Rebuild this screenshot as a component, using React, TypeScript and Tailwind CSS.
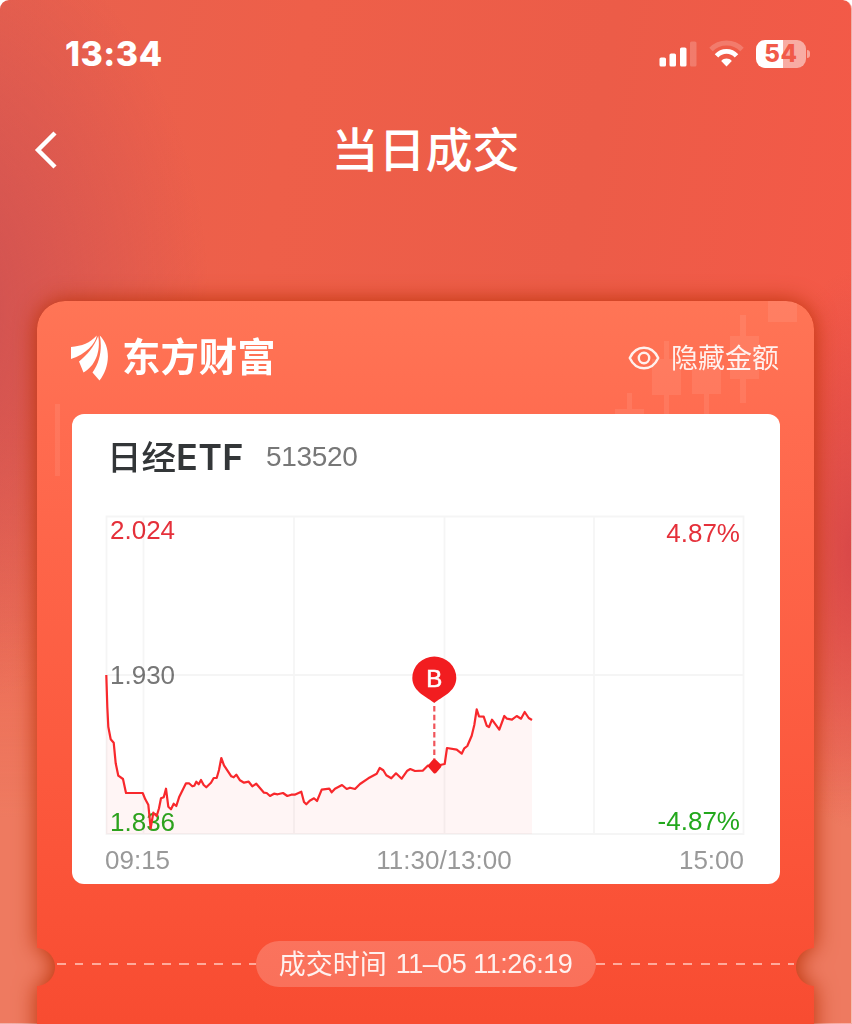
import { ReactNode } from 'react';

// Intraday line, relative to the top left corner of the grid
const prices: [number, number][] = [
  [0.3, 159], [1.3, 190.7], [2.3, 210.7], [4.7, 223.3], [7.7, 226.7], [9.7, 247.3], [12.3, 259.7], [17, 263],
  [20, 277], [36.7, 277], [39.3, 283.3], [42.3, 288.7], [44.7, 312.3], [47.3, 296.7], [50.7, 300], [53, 292.3],
  [55, 282.3], [57.7, 281.3], [60, 272.7], [62.3, 290.7], [65, 293.3], [67.7, 287.7], [70.3, 290], [73.3, 280.7],
  [80, 267.3], [83, 267.3], [86.3, 270.3], [88.3, 269.7], [90.3, 265.7], [92.7, 268.3], [95, 264], [97.7, 269],
  [100.3, 271.3], [105, 266.7], [107.7, 262], [110.7, 262], [113, 254], [115.3, 242], [118, 249.3], [125.3, 260.3],
  [127.7, 261.3], [130.3, 258.7], [134, 264.3], [138, 266.7], [142.7, 265.7], [146.3, 270.3], [150.3, 267.7],
  [158, 276.7], [160.7, 277], [164, 280], [168, 277.7], [171.7, 278.3], [177, 277], [181.3, 280], [185.3, 278.7],
  [188.7, 278.7], [195.3, 275.7], [198, 286], [200.3, 288.3], [203.7, 284.7], [208, 282.3], [211, 285],
  [215.7, 273.7], [223.3, 272.7], [225.7, 276.3], [229, 272.7], [236, 269], [240.7, 273], [244, 271.7], [249, 273],
  [254, 268], [262.3, 262.3], [270.7, 257.7], [273.7, 252], [277.3, 254.3], [280.3, 259.3], [285.3, 262.3],
  [290, 257.3], [295.7, 262.7], [301.3, 254.7], [304.3, 253], [309, 255], [316.7, 254.7], [321.7, 249.7],
  [328.3, 250.3], [338.7, 248], [341, 232], [350.7, 233.7], [355.7, 237.7], [358.3, 232.3], [361.3, 230],
  [365.7, 219.7], [368.3, 209], [370.7, 193.3], [373, 200.3], [377.7, 200.7], [380.7, 209.7], [383, 211],
  [386, 203.7], [393.3, 213.7], [398.3, 200], [401, 202.7], [406, 203.7], [410.7, 200], [415, 202.7],
  [418.7, 196], [422.7, 202], [426, 204],
];
const line = prices.map((p) => p.join(',')).join(' ');

const StatusBar = () => (
  <div className="flex h-[108px] items-center justify-between pl-[65px] pr-[41px] font-['Inter',sans-serif] text-white">
    <span className="text-[34px] font-extrabold leading-none tracking-[0.5px]">13:34</span>
    <div className="flex items-center">
      <svg width="38" height="28" viewBox="0 0 38 28" fill="#fff">
        <rect x="0.5" y="17.5" width="6.5" height="9" rx="1.6" />
        <rect x="10.5" y="13.5" width="6.5" height="13" rx="1.6" />
        <rect x="21" y="7.5" width="6.5" height="19" rx="1.6" />
        <rect x="31" y="1.5" width="6.5" height="25" rx="1.6" opacity="0.2" />
      </svg>
      <svg className="ml-3" width="35" height="28" viewBox="0 0 35 28" fill="none" stroke="#fff" strokeWidth="4.8">
        <path d="M2 9.5 C10.5 0.8 24.5 0.8 33 9.5" opacity="0.2" />
        <path d="M7.5 15.8 C13 9.8 22 9.8 27.5 15.8" />
        <path d="M17.5 26.5 L12.2 21 C15.2 17.8 19.8 17.8 22.8 21 Z" fill="#fff" stroke="none" />
      </svg>
      <div className="ml-3 flex h-7 w-[50px] items-center justify-center rounded-[9px] bg-linear-to-r from-white from-54% to-white/50 to-54% text-[24px] font-extrabold leading-none tracking-[0.6px] text-[#f15a49]">
        54
      </div>
      <div className="ml-px h-2 w-[3px] rounded-r-full bg-white/45" />
    </div>
  </div>
);

const Header = () => (
  <div className="grid h-[84px] grid-cols-[1fr_auto_1fr] items-center text-white">
    <svg className="ml-[34px]" width="24" height="38" viewBox="0 0 24 38" fill="none" stroke="#fff" strokeWidth="4.4">
      <path d="M21 2 L4 19 L21 36" />
    </svg>
    <h1 className="pb-[7px] text-[47px] font-medium leading-none">当日成交</h1>
  </div>
);

const Candles = () => (
  <svg className="absolute inset-0" width="777" height="180" viewBox="0 0 777 180" fill="#fff" fillOpacity="0.08">
    <path d="M731 0 h29 v21 h-29 z" />
    <path d="M703 14 h6 v21 h13 v43 h-13 v24 h-6 v-24 h-10 v-43 h10 z" />
    <path d="M655 67 h29 v26 h-12 v21 h-5 v-21 h-12 z" />
    <path d="M627 40 h5 v18 h12 v36 h-12 v20 h-5 v-20 h-12 v-36 h12 z" />
    <path d="M590 92 h5 v16 h12 v6 h-29 v-6 h12 z" />
    <path d="M18 103 h5 v72 h-5 z" />
  </svg>
);

const BrandRow = () => (
  <div className="flex h-[113px] items-center justify-between pl-[33px] pr-[36px] text-white">
    <div className="flex items-center">
      <svg width="41" height="46" viewBox="0 0 41 46" fill="#fff">
        <path d="M1 12 C12 11 20 8 26.8 0.5 C25.5 9 16 19 1 24 Z" />
        <path d="M28.2 1 C24 12 17 20 9 26.5 L13.5 37.5 C25 31 31 17 28.2 1 Z" />
        <path d="M29.8 0.5 C32 11 31 26 22.5 37.5 L29.5 45.5 C38 35 43 14 29.8 0.5 Z" />
      </svg>
      <span className="ml-[11px] pb-[7px] text-[38.4px] font-bold leading-none">东方财富</span>
    </div>
    <div className="flex items-center opacity-90">
      <svg width="32" height="24" viewBox="0 0 32 24" fill="none" stroke="#fff" strokeWidth="2.4">
        <path d="M1.8 12 C8 -1.6 24 -1.6 30.2 12 C24 25.6 8 25.6 1.8 12 Z" />
        <circle cx="16" cy="12" r="5.2" />
      </svg>
      <span className="ml-[11px] mr-[-1px] pb-[3px] text-[27px] leading-none">隐藏金额</span>
    </div>
  </div>
);

const Label = ({ className, children }: { className: string; children: ReactNode }) => (
  <span className={`absolute text-[26px] leading-none ${className}`}>{children}</span>
);

const Chart = () => (
  <div className="relative mt-[41px] h-[320px] font-['Liberation_Sans',sans-serif]">
    <Label className="left-1 top-px text-[#e5303a]">2.024</Label>
    <Label className="right-1 top-1 text-[#e5303a]">4.87%</Label>
    <Label className="left-1 top-[146px] text-[#777]">1.930</Label>
    <Label className="left-1 top-[293px] text-[#22a81c]">1.836</Label>
    <Label className="right-1 top-[292px] text-[#22a81c]">-4.87%</Label>
    <svg className="relative overflow-visible" width="638" height="320" viewBox="0 0 638 320" fill="none">
      <polygon points={`0,318 ${line} 426,318`} fill="#f83838" fillOpacity="0.05" />
      <path
        d="M0.5 0.5 H637.5 V318 H0.5 Z M0.5 159 H637.5 M37.5 0 V318 M188 0 V318 M338.5 0 V318 M488 0 V318"
        stroke="#000"
        strokeOpacity="0.04"
        strokeWidth="1.8"
      />
      <polyline points={line} stroke="#f8282c" strokeWidth="2.2" strokeLinejoin="round" />
      <path d="M328.3 190 V244" stroke="#f0545a" strokeWidth="2.2" strokeDasharray="5.5 3.2" />
      <path
        d="M328.3 245 L333.5 250 L328.8 255.5 L324 250 Z"
        fill="#f21d20"
        stroke="#f21d20"
        strokeWidth="4"
        strokeLinejoin="round"
      />
      <path
        d="M328.3 187 C322 181.5 306.3 176 306.3 162 A22 21.5 0 0 1 350.3 162 C350.3 176 334.6 181.5 328.3 187 Z"
        fill="#f21d20"
      />
      <text x="328.3" y="170.5" textAnchor="middle" fontSize="24" fill="#fff" stroke="#fff" strokeWidth="0.6">
        B
      </text>
    </svg>
  </div>
);

const QuotePanel = () => (
  <div className="ml-[35px] mr-[34px] h-[470px] rounded-xl bg-white pl-[34px] pr-[36px] pt-6">
    <div className="flex h-[37px] items-center">
      <h2 className="flex items-center pl-px text-[34.5px] font-medium leading-none text-[#333638]">
        <span className="pb-[3px]">日经</span>
        <span className="font-['Inter',sans-serif] text-[36px] font-semibold tracking-[0.4px]">ETF</span>
      </h2>
      <span className="ml-[22px] font-['Liberation_Sans',sans-serif] text-[28px] leading-none tracking-[-0.3px] text-[#777]">
        513520
      </span>
    </div>
    <Chart />
    <div className="grid grid-cols-[1fr_auto_1fr] pt-[5px] font-['Liberation_Sans',sans-serif] text-[26px] leading-[39px] text-[#999]">
      <span className="ml-[-1px]">09:15</span>
      <span className="ml-[38px]">11:30/13:00</span>
      <span className="text-right">15:00</span>
    </div>
  </div>
);

const Dashes = () => (
  <div className="h-[2.5px] flex-1 bg-[repeating-linear-gradient(90deg,#ffaa9b_0_9px,transparent_9px_17.5px)]" />
);

const TimeRow = () => (
  <div className="mt-[57px] flex items-center px-5">
    <Dashes />
    <div className="flex h-[46px] w-[340px] items-center justify-center rounded-full bg-white/20 text-[27px] leading-none text-white/90">
      <span className="pb-1">成交时间</span>
      <span className="ml-[9px] font-['Liberation_Sans',sans-serif] tracking-[-0.5px]">11–05 11:26:19</span>
    </div>
    <Dashes />
  </div>
);

export default function App() {
  return (
    <div className="h-[1024px] w-[852px] overflow-hidden bg-white font-['Noto_Sans_CJK_SC',sans-serif]">
      <div className="h-full rounded-t-[9px] border-b border-r border-white/50 bg-[radial-gradient(ellipse_90px_280px_at_852px_550px,#d94848_0%,#d9484800_100%),radial-gradient(ellipse_280px_400px_at_-70px_310px,#cd5052_0%,#cd505200_100%),linear-gradient(180deg,#ee7a6000_40%,#ee7a60_80%),linear-gradient(100deg,#e8614e_0%,#ee5f49_30%,#ec5c48_60%,#f75847_100%)]">
        <StatusBar />
        <Header />
        <div className="mx-[37px] mt-[109px] drop-shadow-[0_0_11px_#bb3208]">
          <div className="relative h-[780px] rounded-t-[28px] bg-[linear-gradient(180deg,#ff7556_0px,#ff6c50_120px,#fb5439_560px,#f84c31_720px)] [mask-composite:intersect] [mask-image:radial-gradient(circle_19px_at_-1px_666px,transparent_18.5px,#000_19.5px),radial-gradient(circle_19px_at_778px_666px,transparent_18.5px,#000_19.5px)]">
            <Candles />
            <div className="relative">
              <BrandRow />
              <QuotePanel />
              <TimeRow />
            </div>
          </div>
        </div>
      </div>
    </div>
  );
}
